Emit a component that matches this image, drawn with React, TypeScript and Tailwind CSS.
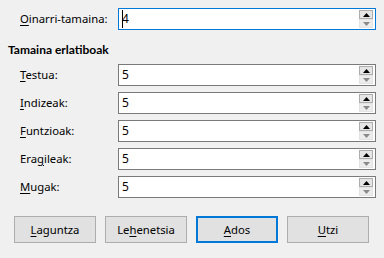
const font = { fontFamily: '"Noto Sans", "Open Sans", sans-serif' }

const Spin = () => (
  <div className="flex flex-col w-[14px] mr-[2px]">
    <div className="h-[9px] border border-[#adadad] bg-[#e5e5e5] flex items-center justify-center">
      <svg width="7" height="4" viewBox="0 0 7 4">
        <path d="M3.5 0 L7 4 L0 4 Z" fill="#000" />
      </svg>
    </div>
    <div className="h-[9px] border border-[#e3e3e3] bg-[#ececec] flex items-center justify-center">
      <svg width="7" height="4" viewBox="0 0 7 4">
        <path d="M0 0 L7 0 L3.5 4 Z" fill="#8a8a8a" />
      </svg>
    </div>
  </div>
)

const Field = ({ label, u, value, focused, caret }: { label: string; u: number; value: string; focused?: boolean; caret?: boolean }) => (
  <div className="flex items-center h-[22px]">
    <label className="w-[118px] pl-[20px] text-[11.3px] text-black leading-[16px]">
      {label.slice(0, u)}
      <span className="underline underline-offset-2">{label[u]}</span>
      {label.slice(u + 1)}
    </label>
    <div
      className={`w-[258px] h-[22px] bg-white flex items-center justify-between border ${
        focused ? "border-[#0078d7]" : "border-[#7a7a7a]"
      }`}
    >
      <span className="pl-[3px] text-[12px] leading-[16px] text-black relative">
        {caret && <span className="absolute left-[3px] top-[-1px] w-px h-[18px] bg-black" />}
        {value}
      </span>
      <Spin />
    </div>
  </div>
)

const Btn = ({ label, u, primary }: { label: string; u: number; primary?: boolean }) => (
  <button
    className={`w-[82px] h-[27px] bg-[#e1e1e1] text-[11.3px] text-black leading-[16px] ${
      primary ? "border-2 border-[#0078d7]" : "border border-[#adadad]"
    }`}
  >
    {label.slice(0, u)}
    <span className="underline underline-offset-2">{label[u]}</span>
    {label.slice(u + 1)}
  </button>
)

export default function App() {
  return (
    <div className="w-[384px] h-[258px] bg-[#f0f0f0] pt-[8px]" style={font}>
      <Field label="Oinarri-tamaina:" u={0} value="4" focused caret />
      <div
        className="mt-[12px] pl-[8px] text-[12px] leading-[16px] font-bold text-black"
        style={{ fontFamily: 'Lato, "Noto Sans", sans-serif' }}
      >
        Tamaina erlatiboak
      </div>
      <div className="mt-[6px] flex flex-col gap-[6px]">
        <Field label="Testua:" u={0} value="5" />
        <Field label="Indizeak:" u={0} value="5" />
        <Field label="Funtzioak:" u={0} value="5" />
        <Field label="Eragileak:" u={3} value="5" />
        <Field label="Mugak:" u={0} value="5" />
      </div>
      <div className="mt-[18px] pl-[14px] flex gap-[9px]">
        <Btn label="Laguntza" u={0} />
        <Btn label="Lehenetsia" u={2} />
        <Btn label="Ados" u={0} primary />
        <Btn label="Utzi" u={0} />
      </div>
    </div>
  )
}
